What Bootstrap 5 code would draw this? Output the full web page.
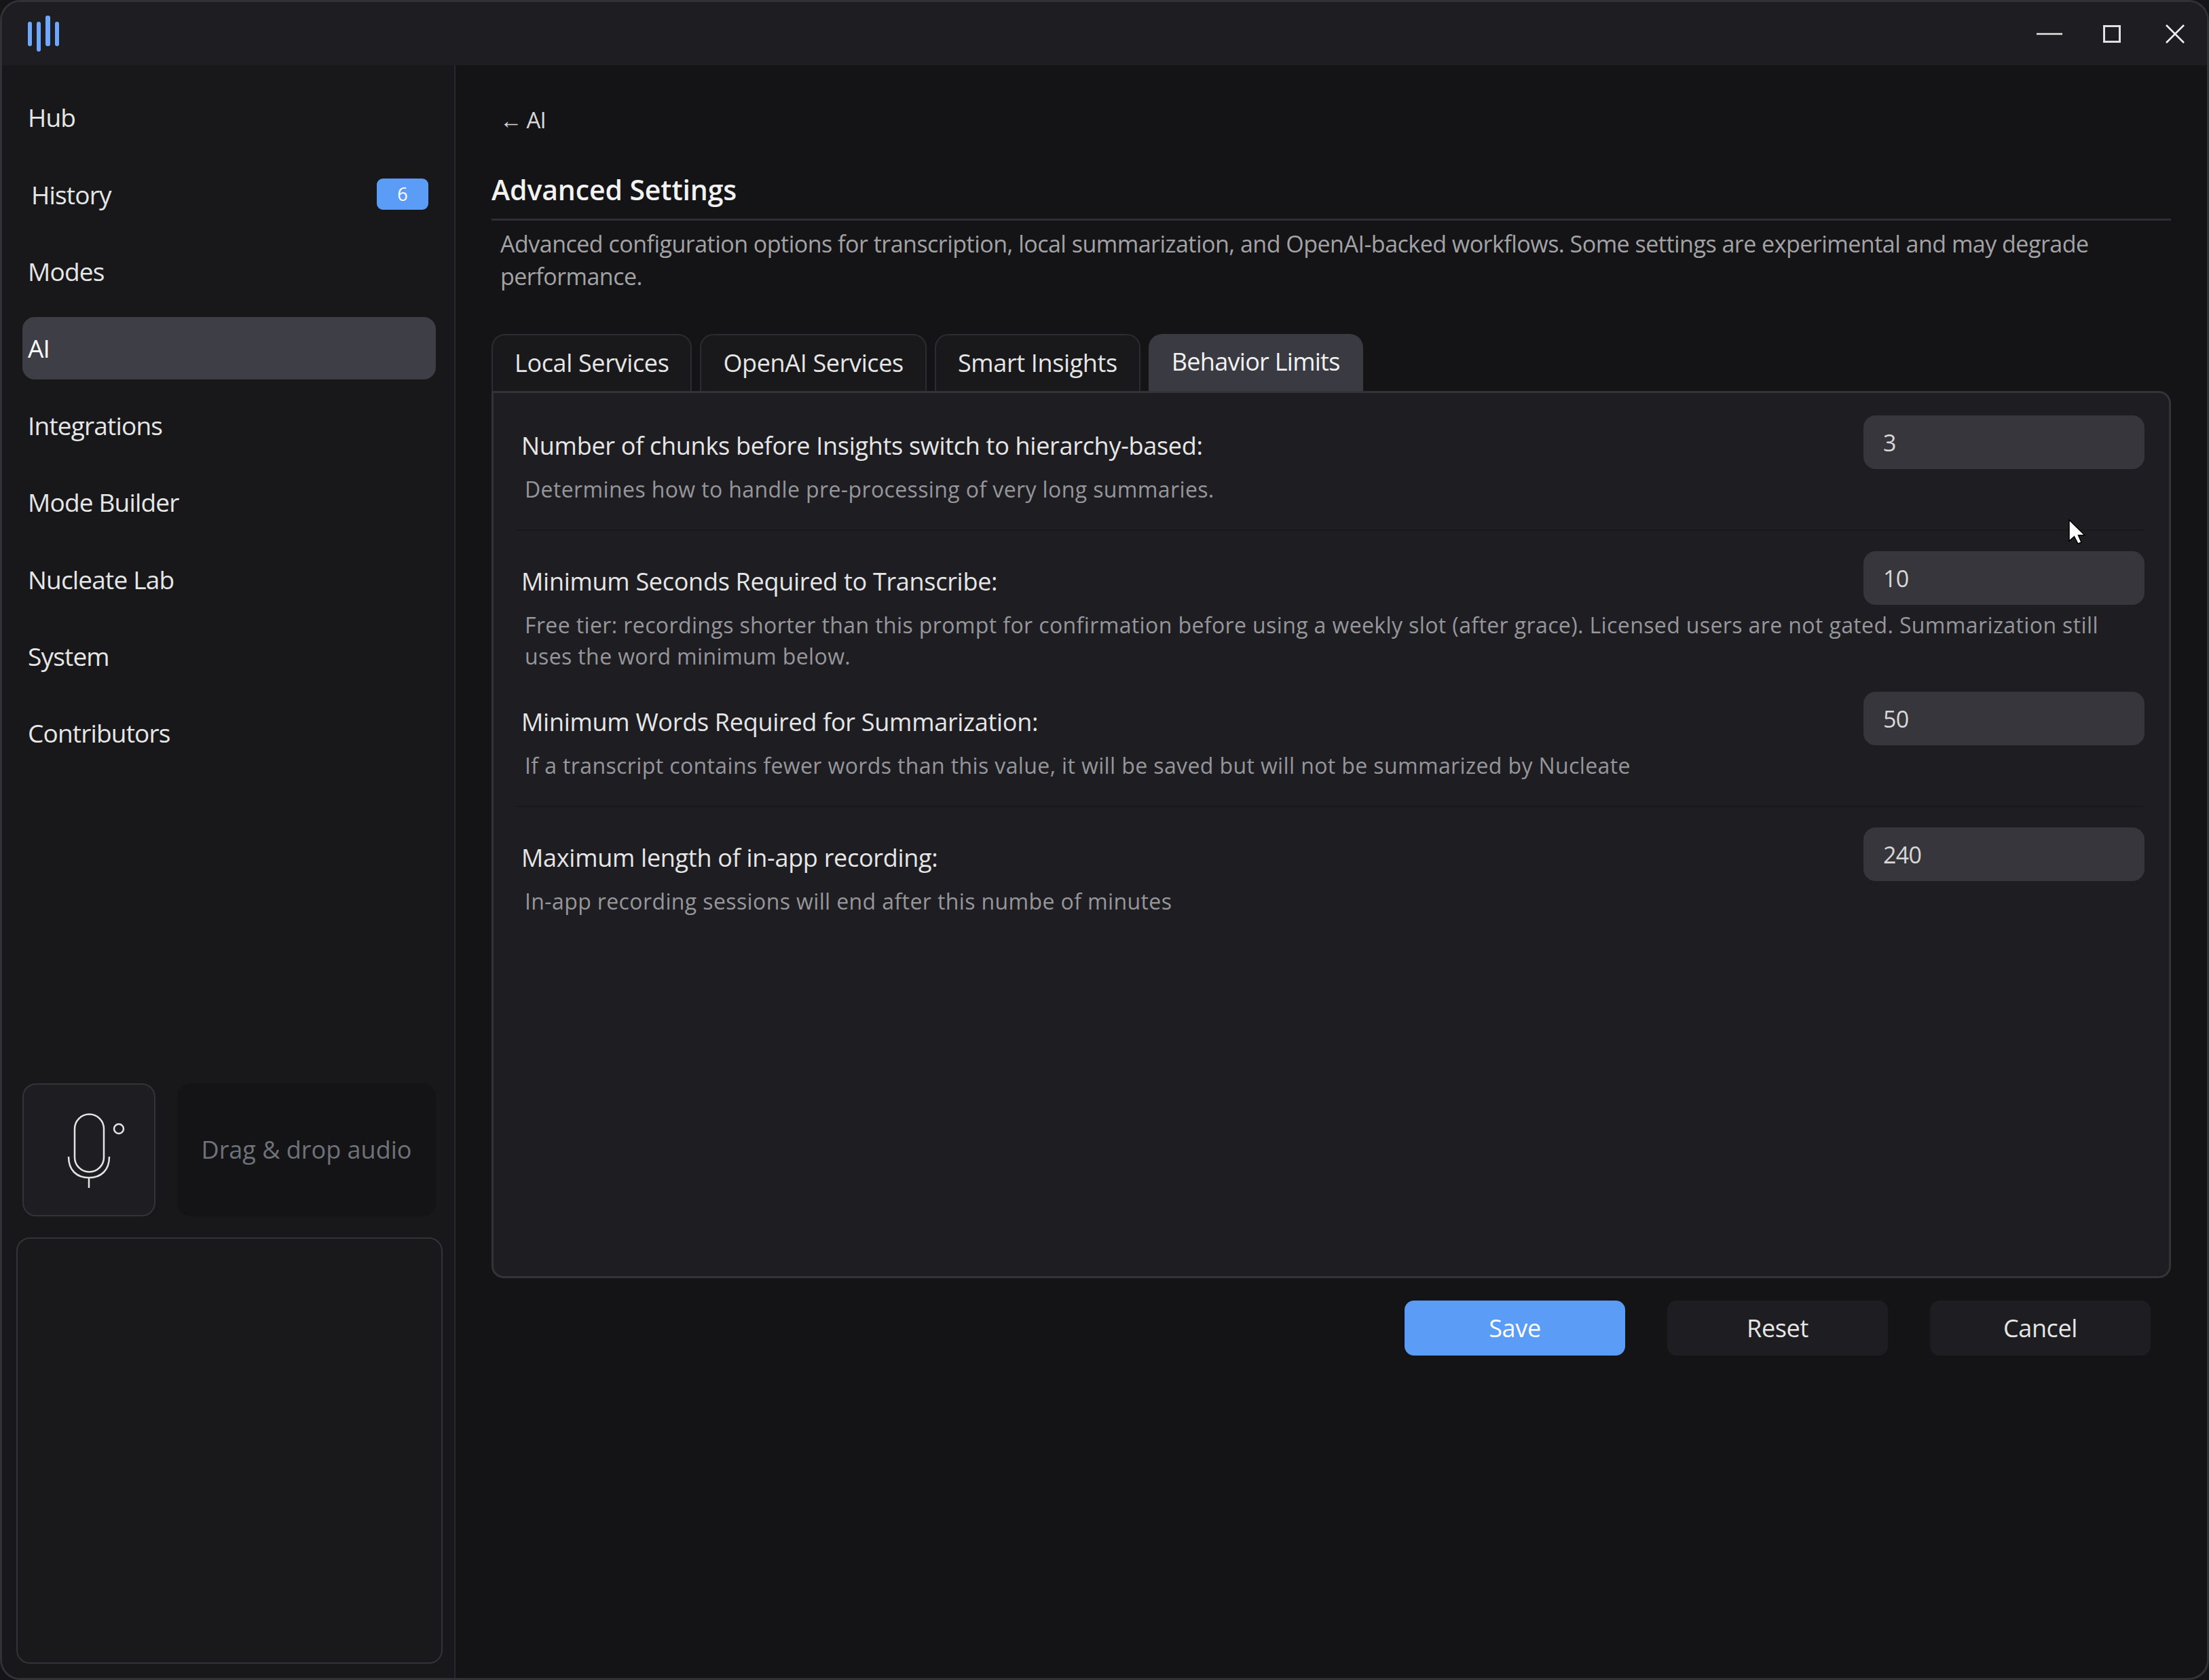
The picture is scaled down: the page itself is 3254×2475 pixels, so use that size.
<!DOCTYPE html>
<html lang="en">
<head>
  <meta charset="UTF-8">
  <title>Advanced Settings</title>
  <link href="https://cdn.jsdelivr.net/npm/bootstrap@5.3.2/dist/css/bootstrap.min.css" rel="stylesheet">
  <style>
    html, body {
      height: 100%;
      background: #151517;
    }
    body {
      font-family: "Open Sans", "Liberation Sans", sans-serif;
      color: #e6e6e6;
      overflow: hidden;
    }
    .app-shell {
      height: 2475px;
      background: #141416;
      border: 3px solid #323236;
      border-radius: 30px;
      overflow: hidden;
    }
    .title-bar {
      height: 93px;
      background: #1e1e22;
      padding-left: 38px;
      flex: none;
    }
    .win-btns svg { display: block; }
    .win-max { margin-left: 60px; }
    .win-close { margin-left: 66px; margin-right: 33px; }
    .side-bar {
      width: 668px;
      flex: none;
      background: #18181b;
      border-right: 2px solid #29292d;
      padding: 31px 27px 21px 30px;
    }
    .side-item {
      height: 92px;
      margin-bottom: 21.4px;
      padding: 0 11px 0 8px;
      border-radius: 18px;
      color: #e6e6e6;
      font-size: 37px;
      letter-spacing: -0.022em;
    }
    .side-item:hover { color: #fff; }
    .side-item.nudge { padding-left: 13px; }
    .side-item.on { background: #3e3e46; color: #fff; }
    .count-pill {
      width: 76px;
      height: 46px;
      line-height: 46px;
      padding: 0;
      font-size: 27px;
      font-weight: 400;
      letter-spacing: 0;
      background: #5b9cf6;
      border-radius: 9px;
    }
    .mic-box {
      width: 196px;
      height: 196px;
      background: #1e1e22;
      border: 2px solid #333338;
      border-radius: 20px;
    }
    .mic-box svg {
      overflow: visible;
      margin-top: 4px;
    }
    .drop-box {
      height: 196px;
      width: 381px;
      background: #141416;
      border-radius: 20px;
      color: #6f7279;
      font-size: 36px;
      letter-spacing: 0;
    }
    .log-panel {
      height: 628px;
      margin: 31px -10px 0 -9px;
      background: #19191c;
      border: 2px solid #333338;
      border-radius: 20px;
    }
    .main-area {
      padding: 0 53px 0 53px;
    }
    .back-link {
      display: inline-block;
      margin: 58px 0 2px 12px;
      height: 46px;
      line-height: 46px;
      font-size: 33px;
      letter-spacing: -0.03em;
      color: #d8d8d8;
    }
    .page-title {
      margin: 54px 0 0;
      height: 46px;
      line-height: 46px;
      font-size: 41px;
      font-weight: 600;
      letter-spacing: -0.003em;
      color: #f2f2f2;
    }
    .title-rule {
      height: 3px;
      margin: 20px 0 0;
      background: #2e2e33;
      opacity: 1;
      border: 0;
    }
    .page-note {
      margin: 10px 0 0 13px;
      font-size: 34px;
      line-height: 48px;
      letter-spacing: -0.015em;
      color: #a3a3a6;
    }
    .tab-strip {
      margin-top: 61px;
      gap: 12px;
      border-bottom: 0;
    }
    .tab-strip .nav-link {
      height: 84px;
      margin: 0;
      padding: 0 32px;
      display: flex;
      align-items: center;
      background: #19191c;
      border: 2px solid #2c2c30;
      border-bottom: 0;
      border-radius: 20px 20px 0 0;
      color: #e6e6e6;
      font-size: 36px;
      letter-spacing: -0.01em;
    }
    .tab-strip .nav-link.active {
      padding-bottom: 4px;
      background: #3a3a42;
      border-color: #3a3a42;
      color: #f2f2f2;
      letter-spacing: -0.02em;
    }
    .limit-panel {
      height: 1307px;
      background: #1e1e22;
      border: 3px solid #333338;
      border-radius: 0 18px 18px 18px;
      padding: 33px 36px 0 41px;
    }
    .limit-row {
      display: grid;
      grid-template-columns: 1fr 414px;
    }
    .limit-row.spaced { margin-top: 29px; }
    .limit-label {
      margin: 20px 0 0;
      font-size: 36px;
      line-height: 50px;
      letter-spacing: -0.008em;
      color: #e6e6e6;
    }
    .limit-help {
      grid-column: 1 / 3;
      margin: 7px 0 0 5px;
      font-size: 32px;
      line-height: 46px;
      letter-spacing: 0.012em;
      color: #96969b;
    }
    .limit-input {
      width: 414px;
      height: 79px;
      padding: 0 29px;
      background: #36363c;
      border: 0;
      border-radius: 18px;
      color: #d8d8d8;
      font-size: 34px;
      letter-spacing: -0.02em;
    }
    .limit-input:focus {
      background: #36363c;
      color: #d8d8d8;
      box-shadow: none;
    }
    .limit-rule {
      height: 2px;
      margin: 36px 0 30px -8px;
      background: #18181b;
      opacity: 1;
      border: 0;
    }
    .foot-btns {
      margin-top: 33px;
      padding-right: 30px;
      gap: 62px;
    }
    .foot-btns .btn {
      width: 325px;
      height: 81px;
      border: 0;
      border-radius: 14px;
      font-size: 36px;
      letter-spacing: -0.01em;
      color: #e6e6e6;
      background: #1e1e22;
    }
    .foot-btns .btn-primary {
      background: #5b9cf6;
      color: #fff;
    }
    .mouse-arrow {
      position: absolute;
      left: 3043px;
      top: 761px;
    }
  </style>
</head>
<body>
  <div class="app-shell d-flex flex-column position-relative">
    <!-- Title bar -->
    <div class="title-bar d-flex align-items-center justify-content-between">
      <svg width="50" height="54" viewBox="0 0 50 54" fill="#6ea8fe">
        <rect x="0" y="9" width="6" height="36" rx="3"/>
        <rect x="13" y="9" width="6" height="44" rx="3"/>
        <rect x="26" y="0" width="7" height="45" rx="3"/>
        <rect x="40" y="9" width="6" height="36" rx="3"/>
      </svg>
      <div class="win-btns d-flex align-items-center">
        <svg width="38" height="6" viewBox="0 0 38 6"><path d="M0 3H38" stroke="#e8e8e8" stroke-width="2.5"/></svg>
        <svg class="win-max" width="26" height="26" viewBox="0 0 26 26"><rect x="1.500" y="1.500" width="23" height="23" fill="none" stroke="#e0e0e0" stroke-width="3"/></svg>
        <svg class="win-close" width="28" height="28" viewBox="0 0 28 28"><path d="M1 1L27 27M27 1L1 27" stroke="#f0f0f0" stroke-width="2.500"/></svg>
      </div>
    </div>

    <div class="d-flex flex-grow-1" style="min-height:0">
      <!-- Sidebar -->
      <aside class="side-bar d-flex flex-column">
        <nav class="nav flex-column">
          <a class="nav-link side-item d-flex align-items-center" href="#">Hub</a>
          <a class="nav-link side-item nudge d-flex align-items-center justify-content-between" href="#">History <span class="badge count-pill">6</span></a>
          <a class="nav-link side-item d-flex align-items-center" href="#">Modes</a>
          <a class="nav-link side-item on d-flex align-items-center" href="#">AI</a>
          <a class="nav-link side-item d-flex align-items-center" href="#">Integrations</a>
          <a class="nav-link side-item d-flex align-items-center" href="#">Mode Builder</a>
          <a class="nav-link side-item d-flex align-items-center" href="#">Nucleate Lab</a>
          <a class="nav-link side-item d-flex align-items-center" href="#">System</a>
          <a class="nav-link side-item d-flex align-items-center" href="#">Contributors</a>
        </nav>
        <div class="mt-auto">
          <div class="d-flex justify-content-between">
            <div class="mic-box d-flex align-items-center justify-content-center">
              <svg width="64" height="112" viewBox="0 0 64 112" fill="none" stroke="#e4e4e4" stroke-width="2.5">
                <rect x="11" y="1.500" width="43" height="85" rx="21.500"/>
                <path d="M2 64C2 84 14 95 32 95C50 95 62 84 62 64"/>
                <path d="M32 95V110"/>
                <circle cx="76" cy="23" r="7"/>
              </svg>
            </div>
            <div class="drop-box d-flex align-items-center justify-content-center">Drag &amp; drop audio</div>
          </div>
          <div class="log-panel"></div>
        </div>
      </aside>

      <!-- Main content -->
      <main class="main-area flex-grow-1">
        <a class="back-link text-decoration-none" href="#">← AI</a>
        <h1 class="page-title">Advanced Settings</h1>
        <hr class="title-rule">
        <p class="page-note">Advanced configuration options for transcription, local summarization, and OpenAI-backed workflows. Some settings are experimental and may degrade performance.</p>

        <ul class="nav nav-tabs tab-strip">
          <li class="nav-item"><a class="nav-link" href="#">Local Services</a></li>
          <li class="nav-item"><a class="nav-link" href="#">OpenAI Services</a></li>
          <li class="nav-item"><a class="nav-link" href="#">Smart Insights</a></li>
          <li class="nav-item"><a class="nav-link active" href="#">Behavior Limits</a></li>
        </ul>

        <div class="limit-panel">
          <div class="limit-row">
            <p class="limit-label">Number of chunks before Insights switch to hierarchy-based:</p>
            <input class="form-control limit-input" value="3">
            <p class="limit-help mb-0">Determines how to handle pre-processing of very long summaries.</p>
          </div>
          <hr class="limit-rule">
          <div class="limit-row">
            <p class="limit-label">Minimum Seconds Required to Transcribe:</p>
            <input class="form-control limit-input" value="10">
            <p class="limit-help mb-0">Free tier: recordings shorter than this prompt for confirmation before using a weekly slot (after grace). Licensed users are not gated. Summarization still uses the word minimum below.</p>
          </div>
          <div class="limit-row spaced">
            <p class="limit-label">Minimum Words Required for Summarization:</p>
            <input class="form-control limit-input" value="50">
            <p class="limit-help mb-0">If a transcript contains fewer words than this value, it will be saved but will not be summarized by Nucleate</p>
          </div>
          <hr class="limit-rule">
          <div class="limit-row">
            <p class="limit-label">Maximum length of in-app recording:</p>
            <input class="form-control limit-input" value="240">
            <p class="limit-help mb-0">In-app recording sessions will end after this numbe of minutes</p>
          </div>
        </div>

        <div class="foot-btns d-flex justify-content-end">
          <button class="btn btn-primary" type="button">Save</button>
          <button class="btn" type="button">Reset</button>
          <button class="btn" type="button">Cancel</button>
        </div>
      </main>
    </div>

    <!-- Mouse pointer sitting over the panel -->
    <svg class="mouse-arrow" width="28" height="40" viewBox="0 0 28 40">
      <path d="M2 2V33L9.500 26.500L15 37L20 35L15.500 24.500L25 24.500Z" fill="#fff" stroke="#000" stroke-width="1.500"/>
    </svg>
  </div>
</body>
</html>
